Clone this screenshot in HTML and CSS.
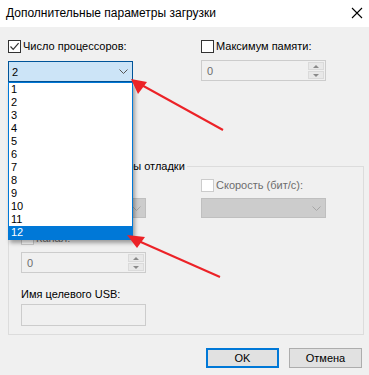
FILE: index.html
```html
<!DOCTYPE html>
<html lang="ru">

<head>
    <title>Дополнительные параметры загрузки</title>
    <link rel="stylesheet" href="styles.css">
</head>

<body>
    <div id="window">
        <div class="titlebar">
            <span class="title">Дополнительные параметры загрузки</span>
            <svg class="close" width="12" height="12" viewBox="0 0 12 12">
                <path d="M1 1 L11 11 M11 1 L1 11" stroke="#000" stroke-width="1.1" fill="none" />
            </svg>
        </div>

        <div class="content">
            <div class="row">
                <div class="col colLeft">
                    <label class="check">
                        <span class="box">
                            <svg width="11" height="11" viewBox="0 0 11 11">
                                <path d="M1.5 5.5 L4.2 8.3 L9.6 2.2" stroke="#333" stroke-width="1.2" fill="none" />
                            </svg>
                        </span>
                        Число процессоров:
                    </label>
                    <div class="combo comboActive">
                        <span>2</span>
                        <svg class="chevron" width="9" height="5" viewBox="0 0 9 5">
                            <path d="M0.5 0.5 L4.5 4.5 L8.5 0.5" stroke="#555" stroke-width="1" fill="none" />
                        </svg>
                    </div>
                </div>
                <div class="col colRight">
                    <label class="check">
                        <span class="box"></span>
                        Максимум памяти:
                    </label>
                    <div class="spin spinTop">
                        <span class="spinValue">0</span>
                        <span class="spinButtons">
                            <span class="spinBtn"><i class="tri up"></i></span>
                            <span class="spinBtn"><i class="tri down"></i></span>
                        </span>
                    </div>
                </div>
            </div>

            <fieldset class="group">
                <legend>Глобальные параметры отладки</legend>
                <div class="row">
                    <div class="col groupLeft">
                        <div class="check disabled">
                            <span class="box"></span>
                        </div>
                        <div class="combo comboDisabled">
                            <span></span>
                            <svg class="chevron" width="9" height="5" viewBox="0 0 9 5">
                                <path d="M0.5 0.5 L4.5 4.5 L8.5 0.5" stroke="#a6a6a6" stroke-width="1" fill="none" />
                            </svg>
                        </div>
                    </div>
                    <div class="col groupRight">
                        <label class="check disabled">
                            <span class="box"></span>
                            Скорость (бит/с):
                        </label>
                        <div class="combo comboDisabled">
                            <span></span>
                            <svg class="chevron" width="9" height="5" viewBox="0 0 9 5">
                                <path d="M0.5 0.5 L4.5 4.5 L8.5 0.5" stroke="#a6a6a6" stroke-width="1" fill="none" />
                            </svg>
                        </div>
                    </div>
                </div>
                <label class="check disabled channel">
                    <span class="box"></span>
                    Канал:
                </label>
                <div class="spin spinChannel">
                    <span class="spinValue">0</span>
                    <span class="spinButtons">
                        <span class="spinBtn"><i class="tri up"></i></span>
                        <span class="spinBtn"><i class="tri down"></i></span>
                    </span>
                </div>
                <div class="fieldLabel">Имя целевого USB:</div>
                <div class="textbox"></div>
            </fieldset>

            <div class="buttons">
                <button type="button" class="btn btnDefault">OK</button>
                <button type="button" class="btn">Отмена</button>
            </div>
        </div>

        <ul class="dropList">
            <li>1</li>
            <li>2</li>
            <li>3</li>
            <li>4</li>
            <li>5</li>
            <li>6</li>
            <li>7</li>
            <li>8</li>
            <li>9</li>
            <li>10</li>
            <li>11</li>
            <li class="selected">12</li>
        </ul>

        <svg class="arrows" width="369" height="375" viewBox="0 0 369 375">
            <line x1="223" y1="130" x2="138" y2="83" stroke="#ec2227" stroke-width="2" />
            <polygon points="131,79 147,82 138,94" fill="#ec2227" />
            <line x1="220" y1="277" x2="134" y2="239" stroke="#ec2227" stroke-width="2" />
            <polygon points="127,235 145,237 137,248" fill="#ec2227" />
        </svg>
    </div>
</body>

</html>
```

FILE: styles.css
```css
body {
    margin: 0;
    background-color: #f0f0f0;
    font-family: "Liberation Sans", Arial, sans-serif;
    font-size: 11px;
    color: #000;
}

#window {
    position: relative;
    width: 369px;
    height: 375px;
    overflow: hidden;
    background-color: #f0f0f0;
}

.titlebar {
    display: flex;
    align-items: center;
    justify-content: space-between;
    height: 27px;
    padding: 0 6px 2px 6px;
    background-color: #fff;
    box-sizing: border-box;
}

.title {
    font-size: 12px;
}

.close {
    margin-top: 1px;
}

.content {
    padding: 13px 0 0 8px;
}

.row {
    display: flex;
}

.col {
    display: flex;
    flex-direction: column;
}

.colLeft {
    width: 125px;
}

.colRight {
    width: 125px;
    margin-left: 68px;
}

.check {
    display: flex;
    align-items: center;
    height: 13px;
    line-height: 13px;
    white-space: nowrap;
}

.box {
    display: inline-flex;
    align-items: center;
    justify-content: center;
    width: 13px;
    height: 13px;
    margin-right: 2px;
    border: 1px solid #333;
    background-color: #fff;
    box-sizing: border-box;
}

.check.disabled {
    color: #6d6d6d;
}

.check.disabled .box {
    border-color: #cccccc;
}

.combo {
    display: flex;
    align-items: center;
    justify-content: space-between;
    box-sizing: border-box;
    padding: 0 4px 0 3px;
}

.comboActive {
    margin-top: 8px;
    height: 21px;
    background-color: #cce4f7;
    border: 1px solid #005499;
}

.comboDisabled {
    margin-top: 6px;
    height: 20px;
    background-color: #cccccc;
    border: 1px solid #bfbfbf;
}

.spin {
    display: flex;
    justify-content: space-between;
    align-items: center;
    width: 125px;
    height: 21px;
    box-sizing: border-box;
    border: 1px solid #cccccc;
    padding: 1px;
}

.spinTop {
    margin-top: 7px;
}

.spinValue {
    color: #6d6d6d;
    padding-left: 4px;
}

.spinButtons {
    display: flex;
    flex-direction: column;
    gap: 1px;
}

.spinBtn {
    display: flex;
    align-items: center;
    justify-content: center;
    width: 16px;
    height: 8px;
    background-color: #e8e8e8;
    border: 1px solid #dadada;
    box-sizing: border-box;
}

.tri {
    width: 0;
    height: 0;
    border-left: 3px solid transparent;
    border-right: 3px solid transparent;
}

.tri.up {
    border-bottom: 3px solid #8a8a8a;
}

.tri.down {
    border-top: 3px solid #8a8a8a;
}

.group {
    margin: 77px 0 0 0;
    width: 356px;
    box-sizing: border-box;
    padding: 6px 12px 8px 12px;
    border: 1px solid #dcdcdc;
}

.group legend {
    padding: 0 2px;
    margin-left: -4px;
    line-height: 14px;
}

.groupLeft {
    width: 125px;
}

.groupRight {
    width: 125px;
    margin-left: 55px;
}

.channel {
    margin-top: 14px;
}

.spinChannel {
    margin-top: 7px;
}

.fieldLabel {
    margin-top: 14px;
    line-height: 14px;
    height: 14px;
}

.textbox {
    margin-top: 3px;
    width: 125px;
    height: 22px;
    box-sizing: border-box;
    border: 1px solid #cccccc;
}

.buttons {
    display: flex;
    justify-content: flex-end;
    gap: 10px;
    margin-top: 13px;
    padding-right: 7px;
}

.btn {
    width: 73px;
    height: 20px;
    padding: 0;
    font-family: "Liberation Sans", Arial, sans-serif;
    font-size: 11px;
    color: #000;
    background-color: #e1e1e1;
    border: 1px solid #adadad;
}

.btnDefault {
    border: 2px solid #0078d7;
}

.dropList {
    position: absolute;
    left: 8px;
    top: 82px;
    width: 125px;
    margin: 0;
    padding: 0;
    list-style: none;
    box-sizing: border-box;
    background-color: #fff;
    border: 1px solid #0078d7;
    box-shadow: 2px 3px 4px rgba(0, 0, 0, 0.35);
}

.dropList li {
    height: 13px;
    line-height: 13px;
    padding-left: 2px;
}

.dropList li.selected {
    background-color: #0078d7;
    color: #fff;
}

.arrows {
    position: absolute;
    left: 0;
    top: 0;
    pointer-events: none;
}
```
